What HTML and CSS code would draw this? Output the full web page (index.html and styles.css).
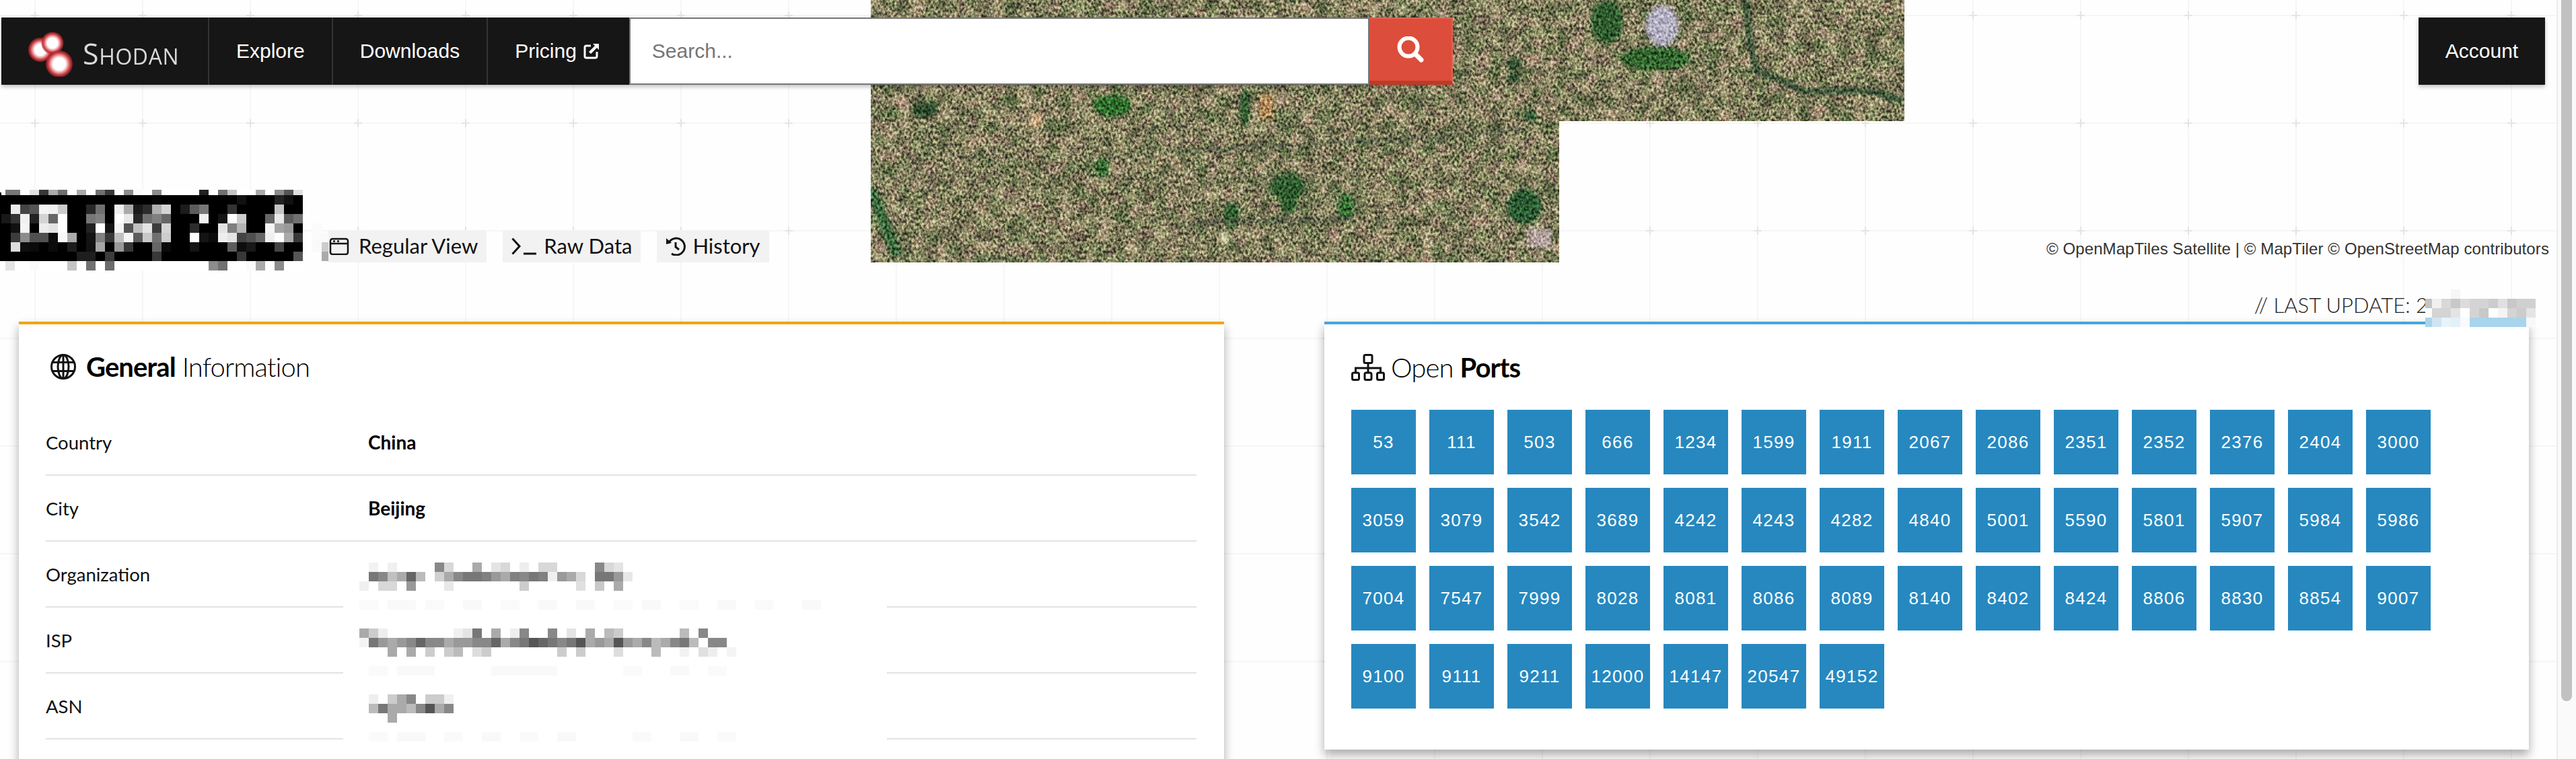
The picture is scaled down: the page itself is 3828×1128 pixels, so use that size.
FILE: index.html
```html
<!DOCTYPE html>
<html lang="en">
<head>
<meta charset="utf-8">
<title>Shodan</title>
<link rel="stylesheet" href="styles.css">
</head>
<body>
<div class="page">
  <svg class="grid" width="3828" height="1128" aria-hidden="true">
    <defs>
      <pattern id="gridtile" width="160" height="160" patternUnits="userSpaceOnUse" patternTransform="translate(-28 -57)">
        <path d="M80 0V160M0 80H160" stroke="#f6f6f7" stroke-width="2" fill="none"/>
        <path d="M74 80H86M80 74V86" stroke="#e4e4e4" stroke-width="2" fill="none"/>
      </pattern>
    </defs>
    <rect width="3828" height="1128" fill="url(#gridtile)"/>
  </svg>

  <svg class="map" width="1536" height="390" viewBox="0 0 1536 390" aria-hidden="true">
    <defs>
      <filter id="fine" x="0" y="0" width="100%" height="100%" color-interpolation-filters="sRGB">
        <feTurbulence type="fractalNoise" baseFrequency="0.28 0.22" numOctaves="2" seed="7"/>
        <feColorMatrix values="1.9 0 0 0 -0.45  1.9 0 0 0 -0.45  1.9 0 0 0 -0.45  0 0 0 0 1"/>
      </filter>
      <filter id="mottle" x="0" y="0" width="100%" height="100%" color-interpolation-filters="sRGB">
        <feTurbulence type="fractalNoise" baseFrequency="0.05" numOctaves="3" seed="4"/>
        <feColorMatrix values="0.55 -0.15 0 0 0.32  0.45 0.05 0 0 0.25  0.4 -0.1 0 0 0.23  0 0 0 0 1"/>
      </filter>
      <filter id="patch" x="0" y="0" width="100%" height="100%" color-interpolation-filters="sRGB">
        <feTurbulence type="fractalNoise" baseFrequency="0.03" numOctaves="4" seed="21"/>
        <feColorMatrix values="0 0 0 0 0.27  0 0 0 0 0.38  0 0 0 0 0.22  4 0 0 0 -2.1"/>
      </filter>
      <filter id="soft"><feGaussianBlur stdDeviation="3"/></filter>
      <clipPath id="mapshape"><path d="M0 0H1536V180H1023V390H0Z"/></clipPath>
    </defs>
    <g clip-path="url(#mapshape)">
      <rect width="1536" height="390" filter="url(#mottle)"/>
      <rect width="1536" height="390" filter="url(#patch)" opacity=".4"/>
      <g filter="url(#soft)">
        <ellipse cx="359" cy="157" rx="30" ry="16" fill="#2f6a2c"/>
        <ellipse cx="81" cy="163" rx="20" ry="11" fill="#2c4a2a"/>
        <ellipse cx="619" cy="277" rx="26" ry="22" fill="#2f5a2d"/>
        <ellipse cx="621" cy="300" rx="13" ry="18" fill="#2f5a2d"/>
        <ellipse cx="706" cy="307" rx="12" ry="20" fill="#356a32"/>
        <ellipse cx="536" cy="320" rx="12" ry="20" fill="#2f5a2d"/>
        <ellipse cx="971" cy="307" rx="26" ry="26" fill="#2c5a30"/>
        <ellipse cx="344" cy="250" rx="10" ry="16" fill="#356a32"/>
        <ellipse cx="556" cy="160" rx="7" ry="30" fill="#2f5a2d"/>
        <ellipse cx="1094" cy="33" rx="24" ry="32" fill="#2f5a2d"/>
        <ellipse cx="1166" cy="87" rx="52" ry="18" fill="#33642f"/>
        <ellipse cx="956" cy="95" rx="12" ry="9" fill="#2c4a2a"/>
        <ellipse cx="956" cy="115" rx="10" ry="8" fill="#2c4a2a"/>
        <ellipse cx="980" cy="172" rx="10" ry="8" fill="#2c5a30"/>
        <ellipse cx="1176" cy="38" rx="24" ry="30" fill="#b2afc2"/>
        <rect x="578" y="140" width="20" height="36" fill="#b0885a"/>
        <rect x="236" y="168" width="18" height="20" fill="#cba983"/>
        <ellipse cx="526" cy="355" rx="6" ry="8" fill="#ded8b0"/>
        <rect x="976" y="340" width="36" height="28" fill="#b3a29e"/>
        <path d="M1300 0L1306 60L1316 105L1360 122L1385 135H1480L1536 150" class="river"/>
        <path d="M970 192L800 205L700 212L450 225" class="road"/>
        <path d="M450 335C520 330 640 325 720 325" class="road"/>
        <path d="M0 280L40 380" class="river wide"/>
        <path d="M60 232H420M20 192H300M40 262H700M120 120V390M260 0V390M440 120V390M720 130V390M880 0V390" class="road thin"/>
      </g>
      <rect width="1536" height="390" filter="url(#fine)" class="map-grain"/>
    </g>
  </svg>

  <header class="topbar">
    <nav class="nav">
      <a class="brand">
        <svg class="logo" width="80" height="70" viewBox="0 0 80 70" aria-hidden="true">
          <defs>
            <radialGradient id="ball">
              <stop offset=".46" stop-color="#fff"/>
              <stop offset=".6" stop-color="#f0b8ba"/>
              <stop offset=".82" stop-color="#cc3b43"/>
              <stop offset="1" stop-color="#a8242c" stop-opacity=".6"/>
            </radialGradient>
          </defs>
          <circle cx="21" cy="30" r="18" fill="url(#ball)"/>
          <circle cx="39" cy="20" r="16.500" fill="url(#ball)"/>
          <circle cx="49" cy="51" r="20" fill="url(#ball)"/>
        </svg>
        <span class="wordmark"><b>S</b>HODAN</span>
      </a>
      <a class="nav-link">Explore</a>
      <a class="nav-link">Downloads</a>
      <a class="nav-link nav-last">Pricing
        <svg class="ext" width="24" height="24" viewBox="0 0 24 24" aria-hidden="true"><path d="M11 4H4.500Q2 4 2 6.500V19.500Q2 22 4.500 22H17.500Q20 22 20 19.500V13" fill="none" stroke="#fff" stroke-width="3"/><path d="M14 1H23V10L20 7L11 16L8 13L17 4Z" fill="#fff"/></svg>
      </a>
    </nav>
    <form class="search">
      <input class="search-input" type="text" placeholder="Search...">
      <button class="search-btn" type="button" aria-label="Search">
        <svg width="40" height="40" viewBox="0 0 40 40" aria-hidden="true"><circle cx="17" cy="16" r="13.500" fill="none" stroke="#fff" stroke-width="6"/><path d="M27 26L36 35" stroke="#fff" stroke-width="7" stroke-linecap="round"/></svg>
      </button>
    </form>
    <a class="account">Account</a>
  </header>

  <section class="subbar">
    <svg class="host m" width="450" height="120" viewBox="0 0 450 120" aria-hidden="true">
      <rect class="base" x="0" y="4" style="width:450px;height:104px" fill="#000"/>
      <rect class="w" x="2" y="0" style="width:448px;height:8px" fill="#fff"/>
      <rect class="w" x="0" y="106" style="width:450px;height:14px" fill="#fff"/>
      <g class="top">
        <rect x="8" fill="#777"/><rect x="16" fill="#777"/><rect x="44" fill="#e0e0e0"/><rect x="58" fill="#383838"/><rect x="72" fill="#aaa"/><rect x="86" fill="#707070"/><rect x="114" fill="#aaa"/><rect x="142" fill="#707070"/><rect x="156" fill="#383838"/><rect x="184" fill="#8c8c8c"/><rect x="198" fill="#fafafa"/><rect x="226" fill="#8c8c8c"/><rect x="296" fill="#222"/><rect x="324" fill="#707070"/><rect x="338" fill="#c4c4c4"/><rect x="380" fill="#aaa"/><rect x="408" fill="#8c8c8c"/><rect x="422" fill="#555"/><rect x="436" fill="#e0e0e0"/>
      </g>
      <g transform="translate(0 8)"><rect x="226" fill="#050505"/><rect x="352" fill="#111"/><rect x="408" fill="#222"/><rect x="422" fill="#111"/></g>
      <g transform="translate(0 22)"><rect x="16" fill="#ebebeb"/><rect x="30" fill="#444"/><rect x="44" fill="#555"/><rect x="58" fill="#f4f4f4"/><rect x="72" fill="#f0f0f0"/><rect x="86" fill="#ccc"/><rect x="128" fill="#282828"/><rect x="142" fill="#707070"/><rect x="170" fill="#eee"/><rect x="184" fill="#aaa"/><rect x="198" fill="#1a1a1a"/><rect x="212" fill="#2c2c2c"/><rect x="226" fill="#b0b0b0"/><rect x="240" fill="#d4d4d4"/><rect x="268" fill="#1c1c1c"/><rect x="282" fill="#5c5c5c"/><rect x="296" fill="#777"/><rect x="338" fill="#333"/><rect x="408" fill="#c4c4c4"/></g>
      <g transform="translate(0 36)"><rect x="2" fill="#181818"/><rect x="16" fill="#333"/><rect x="30" fill="#f0f0f0"/><rect x="44" fill="#222"/><rect x="58" fill="#d4d4d4"/><rect x="72" fill="#666"/><rect x="86" fill="#fff"/><rect x="128" fill="#777"/><rect x="142" fill="#808080"/><rect x="170" fill="#fff"/><rect x="184" fill="#e8e8e8"/><rect x="198" fill="#282828"/><rect x="212" fill="#707070"/><rect x="226" fill="#808080"/><rect x="240" fill="#666"/><rect x="296" fill="#f0f0f0"/><rect x="324" fill="#141414"/><rect x="338" fill="#fff"/><rect x="352" fill="#ccc"/><rect x="394" fill="#666"/><rect x="408" fill="#e8e8e8"/><rect x="422" fill="#5c5c5c"/><rect x="436" fill="#707070"/></g>
      <g transform="translate(0 50)"><rect x="16" fill="#111"/><rect x="30" fill="#f4f4f4"/><rect x="58" fill="#ececec"/><rect x="72" fill="#e4e4e4"/><rect x="86" fill="#fff"/><rect x="128" fill="#222"/><rect x="142" fill="#fff"/><rect x="156" fill="#141414"/><rect x="170" fill="#f4f4f4"/><rect x="184" fill="#555"/><rect x="198" fill="#c0c0c0"/><rect x="212" fill="#e4e4e4"/><rect x="226" fill="#3c3c3c"/><rect x="240" fill="#d4d4d4"/><rect x="282" fill="#2c2c2c"/><rect x="324" fill="#e4e4e4"/><rect x="338" fill="#808080"/><rect x="352" fill="#b4b4b4"/><rect x="394" fill="#f4f4f4"/><rect x="408" fill="#a4a4a4"/><rect x="422" fill="#999"/></g>
      <g transform="translate(0 64)"><rect x="16" fill="#3c3c3c"/><rect x="30" fill="#8c8c8c"/><rect x="44" fill="#505050"/><rect x="58" fill="#505050"/><rect x="72" fill="#0c0c0c"/><rect x="86" fill="#f8f8f8"/><rect x="100" fill="#aaa"/><rect x="128" fill="#141414"/><rect x="142" fill="#808080"/><rect x="156" fill="#383838"/><rect x="170" fill="#c0c0c0"/><rect x="184" fill="#f4f4f4"/><rect x="198" fill="#5c5c5c"/><rect x="212" fill="#c8c8c8"/><rect x="226" fill="#707070"/><rect x="240" fill="#ccc"/><rect x="282" fill="#fff"/><rect x="296" fill="#141414"/><rect x="310" fill="#0a0a0a"/><rect x="324" fill="#eee"/><rect x="338" fill="#e4e4e4"/><rect x="352" fill="#444"/><rect x="366" fill="#505050"/><rect x="380" fill="#666"/><rect x="394" fill="#f0f0f0"/><rect x="408" fill="#fff"/><rect x="422" fill="#aaa"/><rect x="436" fill="#383838"/></g>
      <g transform="translate(0 78)"><rect x="16" fill="#ddd"/><rect x="30" fill="#0e0e0e"/><rect x="44" fill="#0a0a0a"/><rect x="72" fill="#0a0a0a"/><rect x="100" fill="#1c1c1c"/><rect x="128" fill="#111"/><rect x="142" fill="#a4a4a4"/><rect x="170" fill="#999"/><rect x="184" fill="#383838"/><rect x="226" fill="#666"/><rect x="240" fill="#0a0a0a"/><rect x="282" fill="#141414"/><rect x="338" fill="#5c5c5c"/><rect x="352" fill="#0e0e0e"/><rect x="366" fill="#181818"/><rect x="408" fill="#444"/></g>
      <g transform="translate(0 92)"><rect x="114" fill="#1e1e1e"/><rect x="128" fill="#1e1e1e"/><rect x="156" fill="#3c3c3c"/><rect x="226" fill="#383838"/><rect x="352" fill="#383838"/><rect x="436" fill="#555"/></g>
      <g transform="translate(0 106)"><rect x="8" fill="#e4e4e4"/><rect x="44" fill="#fafafa"/><rect x="100" fill="#c4c4c4"/><rect x="128" fill="#707070"/><rect x="156" fill="#6c6c6c"/><rect x="310" fill="#8c8c8c"/><rect x="324" fill="#707070"/><rect x="366" fill="#fafafa"/><rect x="380" fill="#aaa"/><rect x="408" fill="#8c8c8c"/></g>
    </svg>
    <svg class="host-tail m" width="28" height="56" viewBox="0 0 28 56" aria-hidden="true">
      <rect y="0" x="0" fill="#fafafa"/><rect y="14" x="0" fill="#fafafa"/><rect y="14" x="14" fill="#fafafa"/><rect y="28" x="0" fill="#fafafa"/><rect y="28" x="14" fill="#ccc"/><rect y="42" x="14" fill="#aaa"/>
    </svg>
    <div class="views">
      <a class="view view-first">
        <svg width="30" height="26" viewBox="0 0 30 26" aria-hidden="true"><rect x="2" y="2" width="26" height="23" rx="3" fill="none" stroke="#111" stroke-width="2.500"/><path d="M2 9H28" stroke="#111" stroke-width="2.500"/><path d="M6 5.500H9M12 5.500H15" stroke="#111" stroke-width="2.500"/></svg>
        <span>Regular View</span></a>
      <a class="view">
        <svg width="38" height="26" viewBox="0 0 38 26" aria-hidden="true"><path d="M1.500 1.500L12 13L1.500 24.500" fill="none" stroke="#111" stroke-width="3"/><path d="M18 24H37" stroke="#111" stroke-width="3"/></svg>
        <span>Raw Data</span></a>
      <a class="view">
        <svg width="30" height="28" viewBox="0 0 30 28" aria-hidden="true"><path d="M6 7A12.500 12.500 0 1 1 9 25" fill="none" stroke="#111" stroke-width="3"/><path d="M1 2L9 9L1 11Z" fill="#111"/><path d="M15 8V15L20 19" fill="none" stroke="#111" stroke-width="3"/></svg>
        <span>History</span></a>
    </div>
    <p class="attribution">© OpenMapTiles Satellite | © MapTiler © OpenStreetMap contributors</p>
  </section>

  <div class="update">
    <span>// LAST UPDATE: 2</span>
    <svg class="update-mask m" width="168" height="56" viewBox="0 0 168 56" aria-hidden="true">
      <rect x="0" y="14" style="width:164px;height:42px" fill="#fff"/>
      <rect x="38" y="0" fill="#f6f6f6"/>
      <g transform="translate(0 14)"><rect x="0" style="width:10px" fill="#c4c4c4"/><rect x="10" fill="#f0f0f0"/><rect x="24" fill="#d8d8d8"/><rect x="38" fill="#c8c8c8"/><rect x="52" fill="#dcdcdc"/><rect x="66" fill="#d4d4d4"/><rect x="80" fill="#d4d4d4"/><rect x="94" fill="#ccc"/><rect x="108" fill="#e0e0e0"/><rect x="122" fill="#c8c8c8"/><rect x="136" fill="#d0d0d0"/><rect x="150" fill="#d0d0d0"/></g>
      <g transform="translate(0 28)"><rect x="10" fill="#d4d4d4"/><rect x="24" fill="#d4d4d4"/><rect x="38" fill="#e4e4e4"/><rect x="66" fill="#d4d4d4"/><rect x="80" fill="#c8c8c8"/><rect x="108" fill="#f4f4f4"/><rect x="122" fill="#d4d4d4"/><rect x="136" fill="#ccc"/><rect x="150" fill="#e4e4e4"/></g>
      <g transform="translate(0 42)"><rect x="0" style="width:10px" fill="#a8d4ec"/><rect x="10" fill="#cfe5f3"/><rect x="24" fill="#e8f3fa"/><rect x="38" fill="#e2f0f9"/><rect x="52" fill="#f8fbfd"/><rect x="66" fill="#a8d4ec"/><rect x="80" fill="#a8d4ec"/><rect x="94" fill="#a8d4ec"/><rect x="108" fill="#a8d4ec"/><rect x="122" fill="#a8d4ec"/><rect x="136" fill="#a8d4ec"/><rect x="150" fill="#f8f8f8"/></g>
    </svg>
  </div>

  <main class="columns">
    <section class="card card-general">
      <h2 class="card-title">
        <svg width="40" height="40" viewBox="0 0 40 40" aria-hidden="true"><g fill="none" stroke="#111" stroke-width="3"><circle cx="20" cy="20" r="17.500"/><ellipse cx="20" cy="20" rx="8" ry="17.500"/><path d="M3 13.500H37M3 26.500H37M20 2V38"/></g></svg>
        <span><b>General</b> Information</span>
      </h2>
      <div class="row"><span class="key">Country</span><strong class="val">China</strong></div>
      <div class="row"><span class="key">City</span><strong class="val">Beijing</strong></div>
      <div class="row"><span class="key">Organization</span>
        <svg class="redact m" width="808" height="120" viewBox="0 0 808 120" aria-hidden="true">
          <rect class="strip" y="87" x="0"/>
          <g class="faint" transform="translate(0 87)"><rect x="24" fill="#fafafa"/><rect x="66" fill="#f9f9f9"/><rect x="80" fill="#f9f9f9"/><rect x="122" fill="#fafafa"/><rect x="178" fill="#f9f9f9"/><rect x="234" fill="#fafafa"/><rect x="290" fill="#f9f9f9"/><rect x="346" fill="#f9f9f9"/><rect x="402" fill="#fafafa"/><rect x="444" fill="#f9f9f9"/><rect x="500" fill="#fafafa"/><rect x="556" fill="#f9f9f9"/><rect x="612" fill="#fafafa"/><rect x="682" fill="#f9f9f9"/></g>
          <g transform="translate(24 31)"><rect x="14" fill="#f2f2f2"/><rect x="42" fill="#f0f0f0"/><rect x="112" fill="#888"/><rect x="126" fill="#d8d8d8"/><rect x="168" fill="#aaa"/><rect x="196" fill="#e4e4e4"/><rect x="210" fill="#d8d8d8"/><rect x="238" fill="#eee"/><rect x="266" fill="#d8d8d8"/><rect x="280" fill="#d8d8d8"/><rect x="350" fill="#888"/><rect x="364" fill="#d8d8d8"/><rect x="378" fill="#e4e4e4"/></g>
          <g transform="translate(24 45)"><rect x="14" fill="#777"/><rect x="28" fill="#888"/><rect x="42" fill="#c0c0c0"/><rect x="56" fill="#aaa"/><rect x="70" fill="#666"/><rect x="84" fill="#bbb"/><rect x="112" fill="#d0d0d0"/><rect x="126" fill="#aaa"/><rect x="140" fill="#888"/><rect x="154" fill="#777"/><rect x="168" fill="#777"/><rect x="182" fill="#808080"/><rect x="196" fill="#999"/><rect x="210" fill="#aaa"/><rect x="224" fill="#808080"/><rect x="238" fill="#888"/><rect x="252" fill="#777"/><rect x="266" fill="#808080"/><rect x="280" fill="#f0f0f0"/><rect x="294" fill="#999"/><rect x="308" fill="#aaa"/><rect x="322" fill="#d8d8d8"/><rect x="350" fill="#777"/><rect x="364" fill="#777"/><rect x="378" fill="#999"/><rect x="392" fill="#e8e8e8"/></g>
          <g transform="translate(24 59)"><rect x="0" fill="#f0f0f0"/><rect x="28" fill="#d8d8d8"/><rect x="42" fill="#d8d8d8"/><rect x="70" fill="#999"/><rect x="126" fill="#e8e8e8"/><rect x="238" fill="#ccc"/><rect x="322" fill="#e0e0e0"/><rect x="350" fill="#c8c8c8"/><rect x="378" fill="#aaa"/></g>
        </svg>
      </div>
      <div class="row"><span class="key">ISP</span>
        <svg class="redact m" width="808" height="120" viewBox="0 0 808 120" aria-hidden="true">
          <rect class="strip" y="87" x="0"/>
          <g class="faint" transform="translate(0 87)"><rect x="38" fill="#fafafa"/><rect x="80" fill="#f9f9f9"/><rect x="94" fill="#f9f9f9"/><rect x="108" fill="#f9f9f9"/><rect x="220" fill="#f9f9f9"/><rect x="234" fill="#f9f9f9"/><rect x="248" fill="#f9f9f9"/><rect x="262" fill="#f9f9f9"/><rect x="276" fill="#f9f9f9"/><rect x="290" fill="#f9f9f9"/><rect x="416" fill="#fafafa"/><rect x="486" fill="#f9f9f9"/><rect x="542" fill="#fafafa"/></g>
          <g transform="translate(24 31)"><rect x="0" fill="#aaa"/><rect x="14" fill="#ccc"/><rect x="28" fill="#eee"/><rect x="140" fill="#f0f0f0"/><rect x="154" fill="#e4e4e4"/><rect x="168" fill="#777"/><rect x="196" fill="#aaa"/><rect x="224" fill="#eee"/><rect x="238" fill="#888"/><rect x="280" fill="#888"/><rect x="308" fill="#e4e4e4"/><rect x="336" fill="#aaa"/><rect x="364" fill="#bbb"/><rect x="378" fill="#ccc"/><rect x="476" fill="#bbb"/><rect x="504" fill="#888"/></g>
          <g transform="translate(24 45)"><rect x="0" fill="#f4f4f4"/><rect x="14" fill="#777"/><rect x="28" fill="#999"/><rect x="42" fill="#aaa"/><rect x="56" fill="#999"/><rect x="70" fill="#888"/><rect x="84" fill="#666"/><rect x="98" fill="#888"/><rect x="112" fill="#888"/><rect x="126" fill="#aaa"/><rect x="140" fill="#999"/><rect x="154" fill="#999"/><rect x="168" fill="#888"/><rect x="182" fill="#888"/><rect x="196" fill="#666"/><rect x="210" fill="#aaa"/><rect x="224" fill="#888"/><rect x="238" fill="#777"/><rect x="252" fill="#555"/><rect x="266" fill="#666"/><rect x="280" fill="#777"/><rect x="294" fill="#888"/><rect x="308" fill="#777"/><rect x="322" fill="#555"/><rect x="336" fill="#aaa"/><rect x="350" fill="#999"/><rect x="364" fill="#aaa"/><rect x="378" fill="#555"/><rect x="392" fill="#999"/><rect x="406" fill="#aaa"/><rect x="420" fill="#888"/><rect x="434" fill="#bbb"/><rect x="448" fill="#aaa"/><rect x="462" fill="#888"/><rect x="476" fill="#777"/><rect x="490" fill="#bbb"/><rect x="518" fill="#888"/><rect x="532" fill="#888"/></g>
          <g transform="translate(24 59)"><rect x="42" fill="#aaa"/><rect x="70" fill="#aaa"/><rect x="98" fill="#ccc"/><rect x="126" fill="#ccc"/><rect x="140" fill="#bbb"/><rect x="168" fill="#ddd"/><rect x="182" fill="#ccc"/><rect x="294" fill="#ccc"/><rect x="322" fill="#ccc"/><rect x="378" fill="#ddd"/><rect x="434" fill="#bbb"/><rect x="476" fill="#f2f2f2"/><rect x="504" fill="#e0e0e0"/><rect x="518" fill="#eee"/><rect x="546" fill="#f4f4f4"/></g>
        </svg>
      </div>
      <div class="row"><span class="key">ASN</span>
        <svg class="redact m" width="808" height="120" viewBox="0 0 808 120" aria-hidden="true">
          <rect class="strip" y="87" x="0"/>
          <g class="faint" transform="translate(0 87)"><rect x="38" fill="#fafafa"/><rect x="80" fill="#f9f9f9"/><rect x="94" fill="#f9f9f9"/><rect x="150" fill="#fafafa"/><rect x="206" fill="#f9f9f9"/><rect x="262" fill="#fafafa"/><rect x="318" fill="#f9f9f9"/><rect x="430" fill="#fafafa"/><rect x="500" fill="#f9f9f9"/><rect x="556" fill="#fafafa"/></g>
          <g transform="translate(24 31)"><rect x="14" fill="#eee"/><rect x="42" fill="#ccc"/><rect x="56" fill="#aaa"/><rect x="70" fill="#888"/><rect x="98" fill="#ccc"/><rect x="112" fill="#ccc"/><rect x="126" fill="#f0f0f0"/></g>
          <g transform="translate(24 45)"><rect x="14" fill="#bbb"/><rect x="28" fill="#777"/><rect x="42" fill="#aaa"/><rect x="56" fill="#aaa"/><rect x="70" fill="#bbb"/><rect x="84" fill="#888"/><rect x="98" fill="#555"/><rect x="112" fill="#aaa"/><rect x="126" fill="#888"/></g>
          <g transform="translate(24 59)"><rect x="42" fill="#aaa"/></g>
        </svg>
      </div>
    </section>

    <section class="card card-ports">
      <h2 class="card-title">
        <svg width="50" height="40" viewBox="0 0 50 40" aria-hidden="true"><g fill="none" stroke="#111" stroke-width="3"><rect x="19" y="1.500" width="12" height="12" rx="2"/><rect x="1.500" y="28" width="10" height="10.500" rx="2"/><rect x="20" y="28" width="10" height="10.500" rx="2"/><rect x="38.500" y="28" width="10" height="10.500" rx="2"/><path d="M25 13V28M6.500 28V21H43.500V28"/></g></svg>
        <span>Open <b>Ports</b></span>
      </h2>
      <div class="ports">
        <a class="port">53</a><a class="port">111</a><a class="port">503</a><a class="port">666</a><a class="port">1234</a><a class="port">1599</a><a class="port">1911</a><a class="port">2067</a><a class="port">2086</a><a class="port">2351</a><a class="port">2352</a><a class="port">2376</a><a class="port">2404</a><a class="port">3000</a>
        <a class="port">3059</a><a class="port">3079</a><a class="port">3542</a><a class="port">3689</a><a class="port">4242</a><a class="port">4243</a><a class="port">4282</a><a class="port">4840</a><a class="port">5001</a><a class="port">5590</a><a class="port">5801</a><a class="port">5907</a><a class="port">5984</a><a class="port">5986</a>
        <a class="port">7004</a><a class="port">7547</a><a class="port">7999</a><a class="port">8028</a><a class="port">8081</a><a class="port">8086</a><a class="port">8089</a><a class="port">8140</a><a class="port">8402</a><a class="port">8424</a><a class="port">8806</a><a class="port">8830</a><a class="port">8854</a><a class="port">9007</a>
        <a class="port">9100</a><a class="port">9111</a><a class="port">9211</a><a class="port">12000</a><a class="port">14147</a><a class="port">20547</a><a class="port">49152</a>
      </div>
    </section>
  </main>

  <div class="scrollbar"><div class="scrollbar-thumb"></div></div>
</div>
</body>
</html>
```

FILE: styles.css
```css
* { box-sizing: border-box; }
html, body { margin: 0; padding: 0; }
body { background: #fff; color: #111; font-family: "Lato", "Liberation Sans", sans-serif; }
a { color: inherit; text-decoration: none; }

.page { position: relative; width: 3828px; height: 1128px; overflow: hidden; background: #fefefe; }
.grid { position: absolute; left: 0; top: 0; }
.map { position: absolute; left: 1294px; top: 0; }
.map-grain { mix-blend-mode: overlay; opacity: .7; }
.river { fill: none; stroke: #2e4d33; stroke-width: 8; }
.river.wide { stroke-width: 16; stroke: #38663a; }
.road { fill: none; stroke: #4f5a44; stroke-width: 5; }
.road.thin { stroke-width: 3; stroke: #6a6a55; opacity: .6; }

.topbar { position: relative; top: 26px; display: flex; align-items: stretch; height: 100px; padding: 0 46px 0 2px; font-family: "Liberation Sans", Arial, sans-serif; font-size: 30px; }
.nav { display: flex; background: #161616; color: #fff; box-shadow: 0 3px 6px rgba(0,0,0,.25); }
.brand { position: relative; display: flex; align-items: center; width: 307px; padding-left: 37px; }
.logo { flex: none; filter: blur(.6px); margin-top: 6px; }
.wordmark { margin-left: 4px; color: #d8d8d8; font-family: "Open Sans", sans-serif; font-size: 32px; letter-spacing: .6px; filter: blur(.4px); line-height: 1; margin-top: 6px; }
.wordmark b { font-weight: 400; font-size: 43px; }
.nav-link { display: flex; align-items: center; gap: 10px; padding: 0 40px; border-left: 2px solid #333; }
.nav-last { padding-right: 44px; }
.search { display: flex; width: 1224px; box-shadow: 0 3px 6px rgba(0,0,0,.25); }
.search-input { flex: 1; height: 100px; margin: 0; padding: 0 0 0 32px; border: 2px solid #777; background: #fff; color: #111; font: 30px "Liberation Sans", Arial, sans-serif; border-radius: 0; outline: none; }
.search-input::placeholder { color: #757575; opacity: 1; }
.search-btn { display: flex; align-items: center; justify-content: center; width: 124px; height: 100px; padding: 0; margin: 0; border: 0; border-top: 2px solid #e4604f; border-right: 2px solid #e4604f; border-bottom: 6px solid #bf3a26; background: #dc4d3b; }
.account { display: flex; align-items: center; justify-content: center; width: 188px; margin-left: auto; background: #161616; color: #fff; box-shadow: 0 3px 6px rgba(0,0,0,.25); }

.m { shape-rendering: crispEdges; }
.m rect { width: 14px; height: 14px; }
.m .top rect { height: 8px; }
.subbar { position: relative; display: flex; align-items: flex-start; height: 120px; margin-top: 182px; }
.host { flex: none; }
.host-tail { flex: none; margin: 50px -28px 0 14px; }
.views { display: flex; gap: 24px; margin: 60px 0 0 24px; }
.view { display: flex; align-items: center; gap: 10px; height: 48px; padding: 0 13px; background: #f2f2f2; font-size: 31px; color: #111; }
.view span { margin-top: -3px; }
.view-first svg { margin-left: -12px; }
.view-first { gap: 14px; }
.attribution { margin: 74px 40px 0 auto; font: 24px "Liberation Sans", Arial, sans-serif; letter-spacing: .1px; color: #333; line-height: 28px; }

.update { position: relative; display: flex; justify-content: flex-end; height: 76px; padding: 34px 220px 0 0; font-size: 31px; font-weight: 300; color: #222; line-height: 34px; z-index: 3; }
.update-mask { position: absolute; left: 3604px; top: 28px; }

.columns { position: relative; display: grid; grid-template-columns: 1791px 1790px; gap: 149px; padding-left: 28px; z-index: 1; }
.card { background: #fff; box-shadow: 0 8px 14px rgba(0,0,0,.33); }
.card-general { height: 800px; border-top: 4px solid #f5a213; padding: 0 41px 0 40px; }
.card-ports { height: 636px; border-top: 4px solid #44a6dd; padding: 0 40px; }
.card-title { display: flex; align-items: center; gap: 14px; height: 127px; margin: 0; font-size: 40px; font-weight: 300; letter-spacing: -.9px; color: #000; }
.card-general .card-title { padding-left: 6px; padding-bottom: 2px; }
.card-ports .card-title { gap: 9px; }
.card-title b { font-weight: 700; }
.row { position: relative; display: flex; align-items: center; height: 98px; border-bottom: 2px solid #e2e2e2; font-size: 27.500px; }
.key { width: 479px; color: #111; }
.val { font-weight: 700; font-size: 28px; color: #000; }
.redact { position: absolute; left: 442px; top: 0; }
.redact .strip { width: 808px; height: 28px; fill: #fff; }
.faint rect { width: 28px; }

.ports { display: flex; flex-wrap: wrap; gap: 20px; width: 1620px; }
.port { display: flex; align-items: center; justify-content: center; width: 96px; height: 96px; background: #2688bf; color: #fff; font: 26px "Liberation Sans", Arial, sans-serif; letter-spacing: 1.300px; }

.scrollbar { position: absolute; right: 0; top: 0; width: 29px; height: 1128px; background: #fafafa; border-left: 2px solid #ececec; z-index: 4; }
.scrollbar-thumb { width: 16px; height: 1042px; margin-left: 5px; background: #c1c1c1; border-radius: 0 0 8px 8px; }
```
